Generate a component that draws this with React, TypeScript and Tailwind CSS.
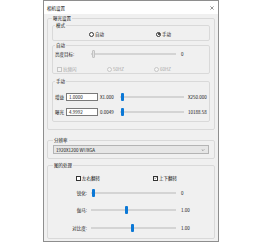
import type { ReactNode } from "react";

function Radio({ label, checked, disabled }: { label: string; checked?: boolean; disabled?: boolean }) {
  return (
    <span className={disabled ? "flex items-center gap-[1px] text-[#a6a6a6]" : "flex items-center gap-[1px]"}>
      <span
        className={
          disabled
            ? "flex h-[5px] w-[5px] items-center justify-center rounded-full border-[0.6px] border-[#c6c6c6] bg-[#f4f4f4]"
            : "flex h-[5px] w-[5px] items-center justify-center rounded-full border-[0.6px] border-[#333333] bg-white"
        }
      >
        {checked && <span className="h-[2px] w-[2px] rounded-full bg-[#1a1a1a]" />}
      </span>
      {label}
    </span>
  );
}

function Check({ label, checked, disabled }: { label: string; checked?: boolean; disabled?: boolean }) {
  return (
    <span className={disabled ? "flex items-center gap-[1px] text-[#a6a6a6]" : "flex items-center gap-[1px]"}>
      <span
        className={
          disabled
            ? "flex h-[5px] w-[5px] items-center justify-center border-[0.6px] border-[#c6c6c6] bg-[#f4f4f4]"
            : "flex h-[5px] w-[5px] items-center justify-center border-[0.6px] border-[#333333] bg-white"
        }
      >
        {checked && (
          <svg viewBox="0 0 10 10" className="h-[4px] w-[4px]">
            <path d="M1.5 5.2 L4 7.6 L8.6 2.4" fill="none" stroke="#1a1a1a" strokeWidth="1.6" />
          </svg>
        )}
      </span>
      {label}
    </span>
  );
}

function Slider({ className, offset, disabled }: { className: string; offset: number; disabled?: boolean }) {
  return (
    <div className={`flex h-[8px] items-center ${className}`}>
      <div className="h-[1.5px] bg-[#d4d4d4]" style={{ width: offset }} />
      <div
        className={
          disabled
            ? "h-[8px] w-[3px] shrink-0 rounded-[1px] border-[0.6px] border-[#c2c2c2] bg-[#e2e2e2]"
            : "h-[8px] w-[3px] shrink-0 rounded-[1px] bg-[#0b78d6]"
        }
      />
      <div className="h-[1.5px] flex-1 bg-[#d4d4d4]" />
    </div>
  );
}

function Group({ title, className, children }: { title: string; className: string; children: ReactNode }) {
  return (
    <fieldset className={`rounded-[2px] border border-[#d9d9d9] ${className}`}>
      <legend className="px-[1px] leading-[6px]">{title}</legend>
      {children}
    </fieldset>
  );
}

function ManualRow({ label, value, min, max, className }: { label: string; value: string; min: string; max: string; className: string }) {
  return (
    <div className={`flex h-[8px] items-center ${className}`}>
      <span className="w-[11px] shrink-0">{label}</span>
      <div className="flex h-[8px] w-[32px] shrink-0 items-center border-[0.6px] border-[#7a7a7a] bg-white pl-[2px]">
        {value}
      </div>
      <span className="ml-[2px] w-[20px] shrink-0">{min}</span>
      <Slider className="w-[64px] shrink-0" offset={1} />
      <span className="ml-[4px]">{max}</span>
    </div>
  );
}

const imageSliders = [
  { label: "锐化:", offset: 1, value: "0", className: "mt-[8px]" },
  { label: "伽马:", offset: 34, value: "1.00", className: "mt-[9px]" },
  { label: "对比度:", offset: 40, value: "1.00", className: "mt-[10px]" },
];

export default function App() {
  return (
    <div className="h-[243px] w-[263px] bg-white font-['Noto_Sans_CJK_SC','Noto_Sans',sans-serif] text-[4.5px] leading-[6px] text-[#111111]">
      <div className="ml-[43px] flex h-[242px] w-[176px] flex-col border border-[#8e8e8e]">
        <div className="flex h-[13px] shrink-0 items-center justify-between bg-white pl-[3px] pr-[4px]">
          <span>相机设置</span>
          <svg viewBox="0 0 10 10" className="h-[4px] w-[4px]">
            <path d="M1 1 L9 9 M9 1 L1 9" stroke="#333333" strokeWidth="1.3" />
          </svg>
        </div>

        <div className="flex flex-1 flex-col bg-[#f0f0f0] px-[3px] pt-[1px]">
          <Group title="曝光设置" className="px-[4px] pb-[7px]">
            <Group title="模式" className="mt-[1px] px-[2px] pb-[3px]">
              <div className="mt-[3px] ml-[34px] flex h-[6px] items-center gap-[52px]">
                <Radio label="自动" />
                <Radio label="手动" checked />
              </div>
            </Group>

            <Group title="自动" className="mt-[1px] px-[2px] pb-[1px]">
              <div className="mt-[2px] flex h-[8px] items-center">
                <span className="w-[36px] shrink-0">亮度目标:</span>
                <Slider className="w-[85px] shrink-0" offset={1} disabled />
                <span className="ml-[5px]">0</span>
              </div>
              <div className="mt-[8px] ml-[2px] flex h-[6px] items-center">
                <div className="w-[50px] shrink-0">
                  <Check label="抗频闪" disabled />
                </div>
                <div className="w-[47px] shrink-0">
                  <Radio label="50HZ" disabled />
                </div>
                <Radio label="60HZ" disabled />
              </div>
            </Group>

            <Group title="手动" className="mt-[4px] px-[2px] pb-[5px]">
              <ManualRow label="增益" value="1.0000" min="X1.000" max="X250.000" className="mt-[9px]" />
              <ManualRow label="曝光" value="4.9992" min="0.0049" max="10188.58" className="mt-[7px]" />
            </Group>
          </Group>

          <Group title="分辨率" className="mt-[7px] px-[5px] pb-[4px]">
            <div className="mt-[2px] flex h-[9px] items-center justify-between border-[0.6px] border-[#b4b4b4] bg-[#e6e6e6] pl-[2px] pr-[3px]">
              <span>1920X1200 WUXGA</span>
              <svg viewBox="0 0 10 6" className="h-[2px] w-[4px]">
                <path d="M1 1 L5 5 L9 1" fill="none" stroke="#444444" strokeWidth="1.2" />
              </svg>
            </div>
          </Group>

          <Group title="图的处理" className="mt-[3px] px-[5px] pb-[6px]">
            <div className="mt-[7px] ml-[23px] flex h-[6px] items-center">
              <div className="w-[77px] shrink-0">
                <Check label="左右翻转" />
              </div>
              <Check label="上下翻转" checked />
            </div>
            {imageSliders.map((s) => (
              <div key={s.label} className={`flex h-[8px] items-center ${s.className}`}>
                <span className="w-[34px] shrink-0 text-right">{s.label}</span>
                <Slider className="ml-[4px] w-[85px] shrink-0" offset={s.offset} />
                <span className="ml-[5px]">{s.value}</span>
              </div>
            ))}
          </Group>
        </div>
      </div>
    </div>
  );
}
